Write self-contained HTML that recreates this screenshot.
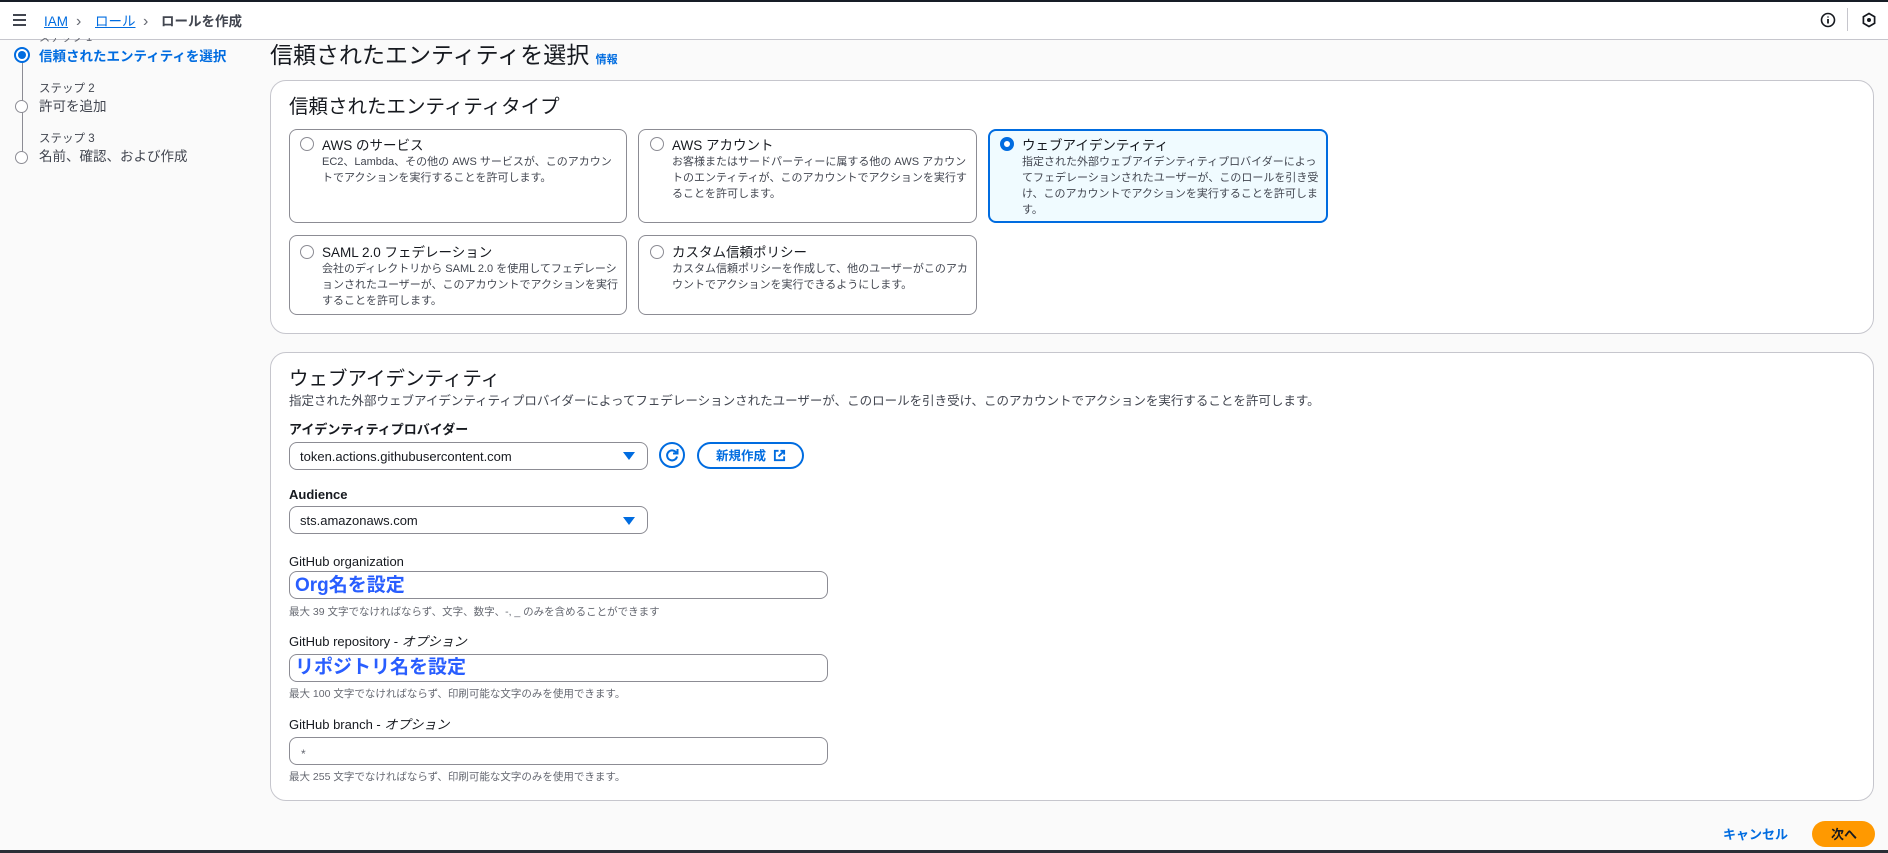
<!DOCTYPE html>
<html><head><meta charset="utf-8"><style>
*{box-sizing:border-box;margin:0;padding:0}
body{width:1888px;height:853px;overflow:hidden;background:#fafafa;font-family:"Liberation Sans","Noto Sans CJK JP",sans-serif;color:#16191f;position:relative;line-height:1.2}
.a{position:absolute;white-space:nowrap;padding-top:3px}
svg.a,.tri,.radio,.inp,.tile,.card{padding-top:0}
.topbar{left:0;top:0;width:1888px;height:2px;background:#161d26}
.hdr{left:0;top:2px;width:1888px;height:38px;background:#fff;border-bottom:1px solid #c6c6cd}
.bot{left:0;top:850px;width:1888px;height:3px;background:#2a2e36}
.card{background:#fff;border:1px solid #c6c6cd;border-radius:16px}
.tile{background:#fff;border:1px solid #8c8c94;border-radius:8px}
.tile.sel{background:#f0fbff;border:2px solid #006ce0}
.radio{width:14px;height:14px;border:1.5px solid #8c8c94;border-radius:50%;background:#fff}
.radio.on{border:4px solid #006ce0}
.tt{font-size:13.5px;color:#16191f}
.td{font-size:11px;color:#424650;line-height:16px;white-space:normal}
.lbl{font-size:13px;font-weight:bold}
.lbl2{font-size:13px}
.inp{background:#fff;border:1px solid #8c8c94;border-radius:8px;height:28px}
.hint{font-size:10.5px;color:#656871}
.big{font-size:19px;font-weight:bold;color:#295eff;padding-left:6px;line-height:23px}
.tri{width:0;height:0;border-left:6px solid transparent;border-right:6px solid transparent;border-top:8px solid #006ce0}
</style></head><body>
<div class="a topbar" style="padding:0"></div>
<div class="a hdr" style="padding:0"></div>
<div class="a" style="left:13px;top:11px;width:13px">
 <div style="height:2px;background:#424650;margin-bottom:3px"></div><div style="height:2px;background:#424650;margin-bottom:3px"></div><div style="height:2px;background:#424650"></div></div>
<div class="a" style="left:44px;top:11px;font-size:13.5px;color:#006ce0;text-decoration:underline">IAM</div>
<div class="a" style="left:76px;top:9px;font-size:16px;color:#656871">›</div>
<div class="a" style="left:95px;top:11px;font-size:13.5px;color:#006ce0;text-decoration:underline">ロール</div>
<div class="a" style="left:143px;top:9px;font-size:16px;color:#656871">›</div>
<div class="a" style="left:161px;top:11px;font-size:13.5px;color:#424650;font-weight:bold">ロールを作成</div>
<svg class="a" style="left:1820px;top:12px" width="16" height="16" viewBox="0 0 16 16"><circle cx="8" cy="8" r="6.5" fill="none" stroke="#16191f" stroke-width="1.6"/><path d="M8 7v4.5M8 4.5v1" stroke="#16191f" stroke-width="1.8"/></svg>
<div class="a" style="left:1847px;top:8px;width:1px;height:23px;background:#c6c6cd;padding:0"></div>
<svg class="a" style="left:1861px;top:12px" width="16" height="16" viewBox="0 0 16 16"><path d="M8 1.5l5.6 3.2v6.6L8 14.5l-5.6-3.2V4.7z" fill="none" stroke="#16191f" stroke-width="1.7"/><circle cx="8" cy="8" r="2" fill="#16191f"/></svg>

<!-- sidebar -->
<div class="a" style="left:22px;top:62px;width:1px;height:96px;background:#8c8c94;padding:0"></div>
<div class="a" style="left:14px;top:47px;width:16px;height:16px;border-radius:50%;border:2px solid #006ce0;background:#fff;padding:0"></div>
<div class="a" style="left:18px;top:51px;width:8px;height:8px;border-radius:50%;background:#006ce0;padding:0"></div>
<div class="a" style="left:39px;top:38px;height:5px;overflow:hidden;font-size:11px;color:#656871;line-height:0;padding:0">ステップ 1</div>
<div class="a" style="left:39px;top:46px;font-size:13.5px;color:#006ce0;font-weight:bold">信頼されたエンティティを選択</div>
<div class="a" style="left:39px;top:80px;font-size:11.5px;color:#424650">ステップ 2</div>
<div class="a radio" style="left:15px;top:100px;width:13px;height:13px;border-width:1.5px"></div>
<div class="a" style="left:39px;top:96px;font-size:13.5px;color:#424650">許可を追加</div>
<div class="a" style="left:39px;top:130px;font-size:11.5px;color:#424650">ステップ 3</div>
<div class="a radio" style="left:15px;top:151px;width:13px;height:13px;border-width:1.5px"></div>
<div class="a" style="left:39px;top:146px;font-size:13.5px;color:#424650">名前、確認、および作成</div>

<div class="a" style="left:270px;top:39px;font-size:23px;color:#16191f">信頼されたエンティティを選択 <span style="font-size:11px;color:#006ce0;font-weight:bold">情報</span></div>

<!-- card 1 -->
<div class="a card" style="left:270px;top:80px;width:1604px;height:254px"></div>
<div class="a" style="left:289px;top:93px;font-size:19.5px">信頼されたエンティティタイプ</div>

<div class="a tile" style="left:289px;top:129px;width:338px;height:94px"></div>
<div class="a radio" style="left:300px;top:137px"></div>
<div class="a tt" style="left:322px;top:135px">AWS のサービス</div>
<div class="a td" style="left:322px;top:151px;width:300px">EC2、Lambda、その他の AWS サービスが、このアカウントでアクションを実行することを許可します。</div>

<div class="a tile" style="left:638px;top:129px;width:339px;height:94px"></div>
<div class="a radio" style="left:650px;top:137px"></div>
<div class="a tt" style="left:672px;top:135px">AWS アカウント</div>
<div class="a td" style="left:672px;top:151px;width:300px">お客様またはサードパーティーに属する他の AWS アカウントのエンティティが、このアカウントでアクションを実行することを許可します。</div>

<div class="a tile sel" style="left:988px;top:129px;width:340px;height:94px"></div>
<div class="a radio on" style="left:1000px;top:137px"></div>
<div class="a tt" style="left:1022px;top:135px">ウェブアイデンティティ</div>
<div class="a td" style="left:1022px;top:151px;width:300px">指定された外部ウェブアイデンティティプロバイダーによってフェデレーションされたユーザーが、このロールを引き受け、このアカウントでアクションを実行することを許可します。</div>

<div class="a tile" style="left:289px;top:235px;width:338px;height:80px"></div>
<div class="a radio" style="left:300px;top:245px"></div>
<div class="a tt" style="left:322px;top:242px">SAML 2.0 フェデレーション</div>
<div class="a td" style="left:322px;top:258px;width:300px">会社のディレクトリから SAML 2.0 を使用してフェデレーションされたユーザーが、このアカウントでアクションを実行することを許可します。</div>

<div class="a tile" style="left:638px;top:235px;width:339px;height:80px"></div>
<div class="a radio" style="left:650px;top:245px"></div>
<div class="a tt" style="left:672px;top:242px">カスタム信頼ポリシー</div>
<div class="a td" style="left:672px;top:258px;width:300px">カスタム信頼ポリシーを作成して、他のユーザーがこのアカウントでアクションを実行できるようにします。</div>

<!-- card 2 -->
<div class="a card" style="left:270px;top:352px;width:1604px;height:449px"></div>
<div class="a" style="left:289px;top:365px;font-size:19.5px">ウェブアイデンティティ</div>
<div class="a" style="left:289px;top:391px;font-size:12.5px;color:#424650">指定された外部ウェブアイデンティティプロバイダーによってフェデレーションされたユーザーが、このロールを引き受け、このアカウントでアクションを実行することを許可します。</div>

<div class="a lbl" style="left:289px;top:419px">アイデンティティプロバイダー</div>
<div class="a inp" style="left:289px;top:442px;width:359px"></div>
<div class="a" style="left:300px;top:446px;font-size:13px">token.actions.githubusercontent.com</div>
<div class="a tri" style="left:623px;top:452px"></div>
<div class="a" style="left:659px;top:442px;width:26px;height:26px;border:2px solid #006ce0;border-radius:50%;padding:0"></div>
<svg class="a" style="left:664px;top:447px" width="16" height="16" viewBox="0 0 16 16"><path d="M12.5 6A5 5 0 1 0 13 9.5" fill="none" stroke="#006ce0" stroke-width="2"/><path d="M13.5 2v4.5H9" fill="none" stroke="#006ce0" stroke-width="2"/></svg>
<div class="a" style="left:697px;top:442px;width:107px;height:27px;border:2px solid #006ce0;border-radius:14px;padding:0"></div>
<div class="a" style="left:716px;top:446px;font-size:12.5px;font-weight:bold;color:#006ce0">新規作成</div>
<svg class="a" style="left:773px;top:449px" width="13" height="13" viewBox="0 0 14 14"><path d="M6 2H2v10h10V8M8 2h4v4M12 2L6 8" fill="none" stroke="#006ce0" stroke-width="2"/></svg>

<div class="a lbl" style="left:289px;top:484px">Audience</div>
<div class="a inp" style="left:289px;top:506px;width:359px"></div>
<div class="a" style="left:300px;top:510px;font-size:13px">sts.amazonaws.com</div>
<div class="a tri" style="left:623px;top:517px"></div>

<div class="a lbl2" style="left:289px;top:551px">GitHub organization</div>
<div class="a inp" style="left:289px;top:571px;width:539px"></div>
<div class="a big" style="left:289px;top:571px">Org名を設定</div>
<div class="a hint" style="left:289px;top:603px">最大 39 文字でなければならず、文字、数字、-, _ のみを含めることができます</div>

<div class="a lbl2" style="left:289px;top:631px">GitHub repository - <i>オプション</i></div>
<div class="a inp" style="left:289px;top:654px;width:539px"></div>
<div class="a big" style="left:289px;top:653px">リポジトリ名を設定</div>
<div class="a hint" style="left:289px;top:685px">最大 100 文字でなければならず、印刷可能な文字のみを使用できます。</div>

<div class="a lbl2" style="left:289px;top:714px">GitHub branch - <i>オプション</i></div>
<div class="a inp" style="left:289px;top:737px;width:539px"></div>
<div class="a" style="left:301px;top:744px;font-size:12px;color:#656871">*</div>
<div class="a hint" style="left:289px;top:768px">最大 255 文字でなければならず、印刷可能な文字のみを使用できます。</div>

<div class="a" style="left:1723px;top:824px;font-size:13px;font-weight:bold;color:#006ce0">キャンセル</div>
<div class="a" style="left:1812px;top:821px;width:63px;height:26px;border-radius:13px;background:#ff9900;padding:0"></div>
<div class="a" style="left:1831px;top:824px;font-size:13px;font-weight:bold;color:#16191f">次へ</div>
<div class="a bot" style="padding:0"></div>
</body></html>
